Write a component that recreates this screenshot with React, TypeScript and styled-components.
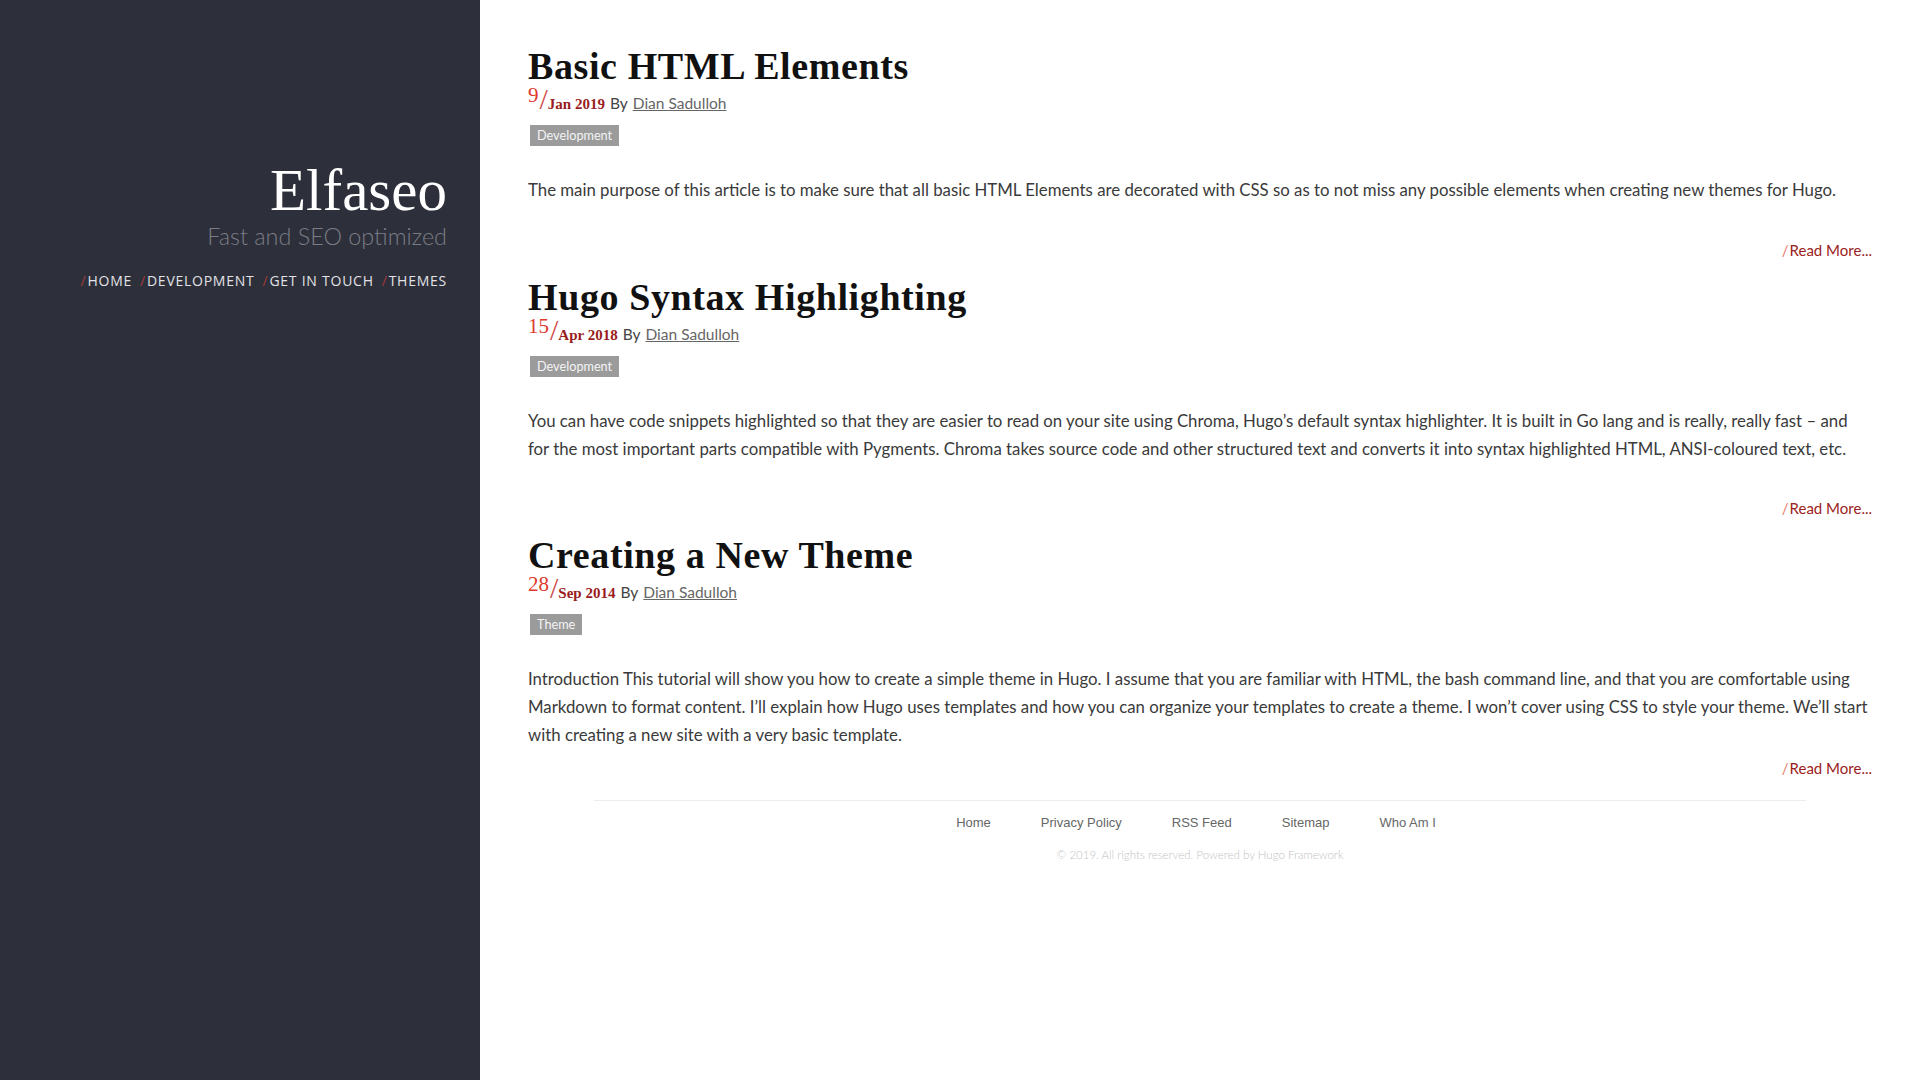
import React from 'react';
import styled, { createGlobalStyle } from 'styled-components';

const GlobalStyle = createGlobalStyle`
    html, body {
        margin: 0;
        padding: 0;
        background: #ffffff;
    }
    body {
        font-family: Lato, "Open Sans", sans-serif;
    }
`;

type Post = {
    title: string;
    day: string;
    month: string;
    tag: string;
    summary: string;
    extraGap: boolean;
};

const posts: Post[] = [
    {
        title: 'Basic HTML Elements',
        day: '9',
        month: 'Jan 2019',
        tag: 'Development',
        summary:
            'The main purpose of this article is to make sure that all basic HTML Elements are decorated with CSS so as to not miss any possible elements when creating new themes for Hugo.',
        extraGap: true,
    },
    {
        title: 'Hugo Syntax Highlighting',
        day: '15',
        month: 'Apr 2018',
        tag: 'Development',
        summary:
            'You can have code snippets highlighted so that they are easier to read on your site using Chroma, Hugo\u2019s default syntax highlighter. It is built in Go lang and is really, really fast \u2013 and for the most important parts compatible with Pygments. Chroma takes source code and other structured text and converts it into syntax highlighted HTML, ANSI-coloured text, etc.',
        extraGap: true,
    },
    {
        title: 'Creating a New Theme',
        day: '28',
        month: 'Sep 2014',
        tag: 'Theme',
        summary:
            'Introduction This tutorial will show you how to create a simple theme in Hugo. I assume that you are familiar with HTML, the bash command line, and that you are comfortable using Markdown to format content. I\u2019ll explain how Hugo uses templates and how you can organize your templates to create a theme. I won\u2019t cover using CSS to style your theme. We\u2019ll start with creating a new site with a very basic template.',
        extraGap: false,
    },
];

const navItems = ['HOME', 'DEVELOPMENT', 'GET IN TOUCH', 'THEMES'];
const footerLinks = ['Home', 'Privacy Policy', 'RSS Feed', 'Sitemap', 'Who Am I'];

export default function App() {
    return (
        <>
            <GlobalStyle />
            <Page>
                <Sidebar>
                    <Brand>Elfaseo</Brand>
                    <Tagline>Fast and SEO optimized</Tagline>
                    <Nav>
                        {navItems.map((item) => (
                            <NavItem key={item} href="#">
                                <Slash>/</Slash>
                                {item}
                            </NavItem>
                        ))}
                    </Nav>
                </Sidebar>
                <Main>
                    {posts.map((post) => (
                        <Article key={post.title}>
                            <Title>{post.title}</Title>
                            <Meta>
                                <Day>{post.day}</Day>
                                <DateSlash>/</DateSlash>
                                <Month>{post.month}</Month>
                                <By>By</By>
                                <Author href="#">Dian Sadulloh</Author>
                            </Meta>
                            <Tags>
                                <Tag>{post.tag}</Tag>
                            </Tags>
                            <Summary $extraGap={post.extraGap}>{post.summary}</Summary>
                            <ReadMoreRow>
                                <ReadMore href="#">
                                    <ReadSlash>/</ReadSlash>Read More...
                                </ReadMore>
                            </ReadMoreRow>
                        </Article>
                    ))}
                    <Footer>
                        <FooterNav>
                            {footerLinks.map((link) => (
                                <FooterLink key={link} href="#">
                                    {link}
                                </FooterLink>
                            ))}
                        </FooterNav>
                        <Copyright>© 2019. All rights reserved. Powered by Hugo Framework</Copyright>
                    </Footer>
                </Main>
            </Page>
        </>
    );
}

const Page = styled.div`
    display: flex;
    min-height: 100vh;
`;

const Sidebar = styled.aside`
    width: 480px;
    flex-shrink: 0;
    background: #2d2f3a;
    padding: 156px 33px 0 0;
    box-sizing: border-box;
    display: flex;
    flex-direction: column;
    align-items: flex-end;
`;

const Brand = styled.h1`
    margin: 0;
    font-family: "Liberation Serif", serif;
    font-weight: 400;
    font-size: 59px;
    line-height: 68px;
    color: #ffffff;
`;

const Tagline = styled.div`
    margin-top: -4px;
    font-family: Lato, sans-serif;
    font-weight: 300;
    font-size: 23.4px;
    line-height: 32px;
    color: #7b7d85;
`;

const Nav = styled.nav`
    display: flex;
    gap: 8px;
    margin-top: 19px;
`;

const NavItem = styled.a`
    font-family: "Open Sans", sans-serif;
    font-size: 14px;
    letter-spacing: 0.75px;
    color: #e2e2e6;
    text-decoration: none;
`;

const Slash = styled.span`
    color: #a23a3a;
    margin-right: 1px;
`;

const Main = styled.main`
    flex: 1;
    padding: 47px 48px 0;
    box-sizing: border-box;
`;

const Article = styled.article`
    & + & {
        margin-top: 18px;
    }
`;

const Title = styled.h2`
    margin: 0;
    font-family: "Liberation Serif", serif;
    font-weight: 700;
    font-size: 38px;
    line-height: 38px;
    color: #111111;
    letter-spacing: 0.6px;
`;

const Meta = styled.div`
    display: flex;
    align-items: flex-end;
    height: 28px;
    margin-top: 0;
`;

const Day = styled.span`
    align-self: flex-start;
    font-family: "Liberation Serif", serif;
    font-size: 21px;
    line-height: 20px;
    color: #e0392c;
`;

const DateSlash = styled.span`
    align-self: flex-start;
    font-family: "Liberation Serif", serif;
    font-size: 30px;
    line-height: 28px;
    color: #d04a4a;
    margin: 0 0 0 1px;
`;

const Month = styled.span`
    font-family: "Liberation Serif", serif;
    font-weight: 700;
    font-size: 15px;
    line-height: 18px;
    color: #9a1d1d;
    margin-right: 5px;
`;

const By = styled.span`
    font-family: Lato, sans-serif;
    font-size: 15.5px;
    line-height: 19px;
    color: #444444;
    margin-right: 5px;
`;

const Author = styled.a`
    font-family: Lato, sans-serif;
    font-size: 15.5px;
    line-height: 19px;
    color: #666666;
    text-decoration: underline;
`;

const Tags = styled.div`
    display: flex;
    margin-top: 12px;
    padding-left: 2px;
`;

const Tag = styled.span`
    padding: 0 7px;
    height: 21px;
    line-height: 21px;
    background: #9b9b9b;
    color: #f4f4f4;
    font-family: Lato, sans-serif;
    font-size: 12.7px;
`;

const Summary = styled.p<{ $extraGap: boolean }>`
    margin: 30px 0 ${(p) => (p.$extraGap ? '36px' : '9px')};
    font-family: Lato, sans-serif;
    font-size: 16.8px;
    line-height: 27.8px;
    color: #3a3a3a;
`;

const ReadMoreRow = styled.div`
    display: flex;
    justify-content: flex-end;
    height: 20px;
    line-height: 20px;
`;

const ReadMore = styled.a`
    font-family: Lato, sans-serif;
    font-size: 15px;
    color: #9b2222;
    text-decoration: none;
`;

const ReadSlash = styled.span`
    color: #e57a6e;
    margin-right: 1px;
`;

const Footer = styled.footer`
    margin: 22px 66px 0;
    border-top: 1px solid #ececec;
    padding-top: 12px;
    display: flex;
    flex-direction: column;
    align-items: center;
`;

const FooterNav = styled.div`
    display: flex;
    gap: 50px;
    margin-right: 8px;
`;

const FooterLink = styled.a`
    font-family: "Liberation Sans", Arial, sans-serif;
    font-size: 13px;
    line-height: 20px;
    color: #666666;
    text-decoration: none;
`;

const Copyright = styled.div`
    margin-top: 14px;
    font-family: Lato, sans-serif;
    font-weight: 300;
    font-size: 11.5px;
    line-height: 16px;
    color: #c4c4c4;
`;
